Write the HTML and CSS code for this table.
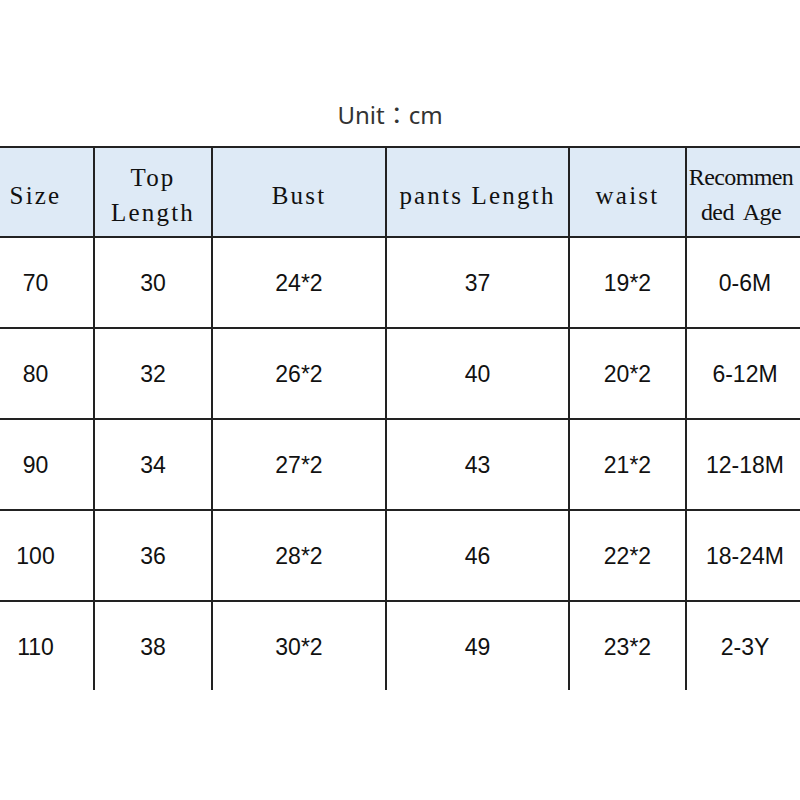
FILE: index.html
```html
<!DOCTYPE html>
<html lang="en">
<head>
<meta charset="utf-8">
<title>Size chart</title>
<link rel="stylesheet" href="styles.css">
</head>
<body>
<div class="unit">Unit<span class="colon">：</span>cm</div>
<table class="chart">
  <colgroup>
    <col class="c1"><col class="c2"><col class="c3"><col class="c4"><col class="c5"><col class="c6">
  </colgroup>
  <thead>
    <tr>
      <th>Size</th>
      <th>Top<br>Length</th>
      <th>Bust</th>
      <th>pants Length</th>
      <th>waist</th>
      <th class="narrow">Recommen<br>ded Age</th>
    </tr>
  </thead>
  <tbody>
    <tr><td>70</td><td>30</td><td>24*2</td><td>37</td><td>19*2</td><td>0-6M</td></tr>
    <tr><td>80</td><td>32</td><td>26*2</td><td>40</td><td>20*2</td><td>6-12M</td></tr>
    <tr><td>90</td><td>34</td><td>27*2</td><td>43</td><td>21*2</td><td>12-18M</td></tr>
    <tr><td>100</td><td>36</td><td>28*2</td><td>46</td><td>22*2</td><td>18-24M</td></tr>
    <tr class="last"><td>110</td><td>38</td><td>30*2</td><td>49</td><td>23*2</td><td>2-3Y</td></tr>
  </tbody>
</table>
</body>
</html>
```

FILE: styles.css
```css
html, body {
  margin: 0;
  padding: 0;
  background: #ffffff;
  overflow: hidden;
}

.unit {
  margin-top: 98px;
  padding-right: 20px;
  height: 32px;
  line-height: 32px;
  text-align: center;
  font-family: "Noto Sans", "Noto Sans CJK TC", sans-serif;
  font-size: 24px;
  color: #333333;
}

.unit .colon {
  font-family: "Noto Sans CJK TC", sans-serif;
}

.chart {
  margin-top: 16px;
  margin-left: -24px;
  width: 827px;
  table-layout: fixed;
  border-collapse: collapse;
}

.c1 { width: 117px; }
.c2 { width: 118px; }
.c3 { width: 174px; }
.c4 { width: 183px; }
.c5 { width: 117px; }
.c6 { width: 118px; }

.chart th,
.chart td {
  border: 2px solid #222222;
  padding: 0;
  text-align: center;
  vertical-align: middle;
  color: #111111;
}

.chart th {
  height: 82px;
  padding-top: 6px;
  background: #deeaf6;
  font-family: "Liberation Serif", "Times New Roman", serif;
  font-weight: normal;
  font-size: 25px;
  letter-spacing: 2.2px;
  line-height: 35px;
}

.chart th.narrow {
  font-size: 24px;
  letter-spacing: -0.6px;
  word-spacing: 5px;
  padding-right: 8px;
}

.chart td {
  height: 87px;
  padding-top: 2px;
  font-family: "Liberation Sans", Arial, sans-serif;
  font-size: 23px;
}

.chart tr.last td {
  border-bottom: none;
  height: 86px;
}
```
